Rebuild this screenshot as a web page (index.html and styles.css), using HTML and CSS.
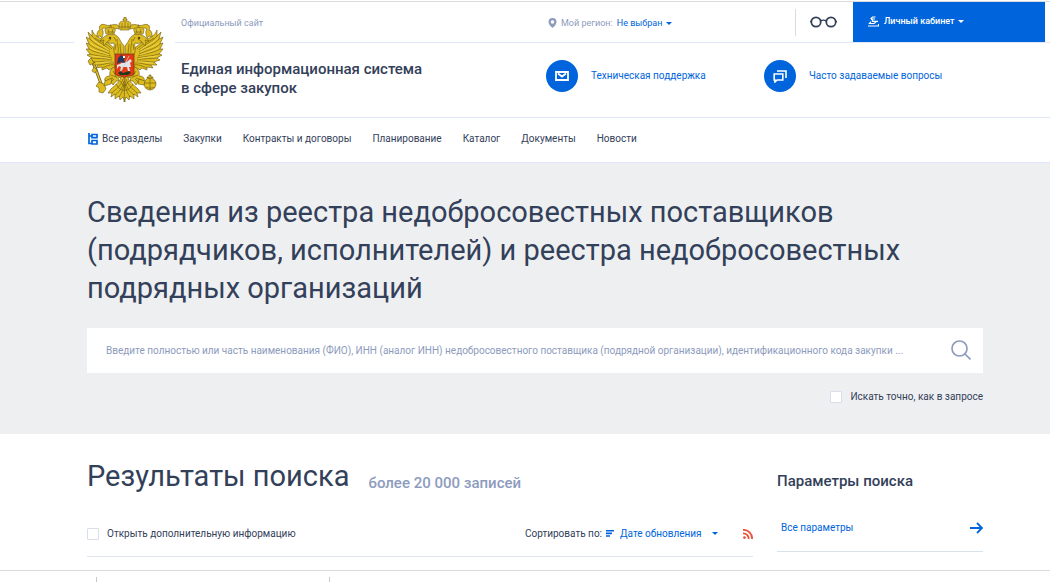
FILE: index.html
```html
<!DOCTYPE html>
<html lang="ru">
<head>
  <meta charset="UTF-8">
  <meta name="viewport" content="width=device-width, initial-scale=1.0">
  <title>Единая информационная система в сфере закупок</title>
  <link rel="stylesheet" href="styles.css">
</head>
<body>
  <header class="header">
    <div class="header-edge"></div>
    <a href="#" class="logo" aria-label="Главная">
      <svg width="78" height="85" viewBox="0 0 78 85">
        <defs>
          <g id="half" stroke="#6b580e" stroke-width="0.6" stroke-linejoin="round">
            <!-- ribbon -->
            <path fill="#dcbc1e" d="M33 9C28 5 25 10 20 8C15 6 12 9 14 13C10 14 12 18 10 20L14 19L16 21C17 17 18 15 16 12C19 10 21 12 25 12C28 12 30 11 33 12Z"/>
            <!-- wing -->
            <path fill="#dcbc1e" d="M27 30C23 27 20 24 16 22C11 20 8 18 6 13L6 19L2 15L4 22L0 20L3 27L0 26L3 32L0 32L4 37L1 38L6 41L3 43L9 45L6 48L12 48L10 51L16 50L16 53L21 51L23 53L30 49L31 36Z"/>
            <path fill="none" d="M6 19C10 24 17 27 24 33M4 22C9 28 16 30 24 35M3 27C8 32 15 33 24 37M3 32C9 36 16 36 25 39M4 37C10 39 17 39 26 41M6 41C12 42 19 41 26 43M9 45C15 45 21 43 27 45M12 48C18 48 23 45 28 46M16 51C21 49 25 47 29 48M9 21C14 25 20 26 26 32"/>
            <path fill="none" stroke="#f4df63" stroke-width="0.7" d="M5 21C10 26 17 28 23 33M4 26C9 30 16 31 23 35M4 31C9 34 15 35 23 38M6 39C12 40 19 40 25 42M10 46C16 46 22 44 27 45"/>
            <!-- head and neck -->
            <path fill="#dcbc1e" d="M30 39C26 34 29 29 28 26C25 27 23 26 21 25L18 29C17 26 17 25 18 23L14 24C17 20 20 18 24 17C29 16 33 20 35 25L38 29L38 38Z"/>
            <path fill="none" d="M31 22C31 27 33 30 32 36M34 27L35 37M28 20L30 24M21 25L25 22M30 27L29 33"/>
            <circle cx="24" cy="21" r="1" fill="#27200a"/>
            <!-- small crown -->
            <path fill="#dfc02c" d="M20 17L19 13C19 11 22 10 24 11L24 8L25 8L25 11C28 10 30 12 29 14L28 17Z"/>
            <path fill="none" d="M21 15H28M22 12L23 16M27 12L26 16"/>
            <!-- leg and claw -->
            <path fill="#dcbc1e" d="M29 50C25 51 23 55 24 59C20 59 18 61 19 64L22 63L21 67L25 65L27 68L30 64L33 64L32 61L36 60L34 52Z"/>
            <path fill="none" d="M27 54L31 61M25 58L30 60M30 53L33 59M22 63L27 61M25 65L28 62"/>
            <!-- tail -->
            <path fill="#dcbc1e" d="M38 58L35 60C34 65 29 68 25 72L22 76L26 76L25 80L29 77L29 82L33 79L34 83L37 80L39 85Z"/>
            <path fill="none" d="M37 62C35 69 30 72 26 76M38 64C36 72 33 75 29 78M38 67C37 74 35 77 33 80M30 67C32 71 36 74 38 73M34 64L38 69"/>
          </g>
        </defs>
        <path d="M6 42L17 72" stroke="#6b580e" stroke-width="3"/>
        <path d="M6 42L17 72" stroke="#e0c335" stroke-width="1.500"/>
        <use href="#half"/>
        <use href="#half" transform="matrix(-1 0 0 1 77 0)"/>
        <!-- scepter -->
        <g fill="#dcbc1e" stroke="#6b580e" stroke-width="0.6">
          <path d="M5 41L2 44L4 48L8 46ZM13 65L10 69L13 71L13 75L17 76L20 72L18 67ZM8 50L6 54L9 56L11 53Z"/>
          <path d="M19 64L26 61L25 67L18 69Z"/>
          <!-- orb -->
          <circle cx="64" cy="67" r="6"/>
          <path fill="none" d="M58 66H70M64 61V73M60 70C63 72 67 71 69 70"/>
          <path d="M63 58H65V60H67V61H61V60H63Z"/>
          <path d="M53 62L59 64L58 68L52 67Z"/>
          <!-- main crown -->
          <path fill="#dfc02c" d="M34 13L33 7C34 4 37 4 38 4L38 3H37V2H38V0H40V2H41V3H40L40 4C43 4 45 5 45 8L43 13Z"/>
          <path fill="none" d="M34 10H44M36 6L36 12M39 4V12M42 6L42 12"/>
        </g>
        <!-- shield -->
        <path fill="#e33b16" stroke="#7b3a0c" stroke-width="0.8" d="M29 37H48V57L45 59H41L38.500 61L36 59H32L29 57Z"/>
        <path fill="#dfe5ea" d="M34 47L37 45L39 46L42 44L44 42L46 44L44 46L45 50L43 50L44 54L42 54L41 50L37 50L36 53L34 54L35 50L33 49L31 52L31 48Z"/>
        <path fill="#253a5e" d="M32 41L35 38L39 40L38 43L39 45L37 46L35 45L31 47Z"/>
        <path fill="#fff" d="M37 39H39V41H37Z"/>
        <path stroke="#ced2d6" stroke-width="0.8" d="M43 39L34 56"/>
        <path fill="#27371f" d="M32 56L35 54L37 56L43 54L45 56L42 58H34Z"/>
      </svg>
    </a>
    <div class="topbar">
      <span class="official">Официальный сайт</span>
      <div class="region">
        <svg width="9" height="10" viewBox="0 0 9 10"><path fill="#8d9bbd" fill-rule="evenodd" d="M4.500 0A4 4 0 0 0 .5 4C.5 6.500 3 8.500 4.500 10C6 8.500 8.500 6.500 8.500 4A4 4 0 0 0 4.500 0ZM4.500 2.200A1.800 1.800 0 1 1 4.500 5.800A1.800 1.800 0 1 1 4.500 2.200Z"/></svg>
        <span>Мой регион:</span>
        <button type="button" class="region-button">Не выбран <i class="caret"></i></button>
      </div>
      <button type="button" class="vision" aria-label="Версия для слабовидящих">
        <svg width="28" height="12" viewBox="0 0 28 12" fill="none" stroke="#334059" stroke-width="1.700"><circle cx="6" cy="6" r="4.700"/><circle cx="21" cy="6" r="4.700"/><path d="M10.500 5C12 4 15 4 16.500 5M0 5.500H2M25 5.500H27"/></svg>
      </button>
      <button type="button" class="cabinet">
        <svg width="11" height="11" viewBox="0 0 11 11" fill="none" stroke="#fff" stroke-width="1.200"><path d="M7.500 1H4.500L3 2.500L5 5M3.500 3H7M4 5.300H10M3 5.500L1.500 7.500H6L8 6M0 10H10.500V8"/></svg>
        <span>Личный кабинет</span>
        <i class="caret"></i>
      </button>
    </div>
    <div class="brand">
      <a href="#" class="brand-name">Единая информационная система<br>в сфере закупок</a>
      <a href="#" class="help">
        <span class="help-icon">
          <svg width="14" height="10" viewBox="0 0 14 10" fill="none" stroke="#fff" stroke-width="1.800"><path d="M1 1H13V9H1ZM3 2.500L7 5.500L11 2.500"/></svg>
        </span>
        Техническая поддержка
      </a>
      <a href="#" class="help">
        <span class="help-icon">
          <svg width="14" height="14" viewBox="0 0 14 14" fill="none" stroke="#fff" stroke-width="1.600"><path d="M4 2H13V9M1.200 5H9.800V11H4L2 13V11H1.200Z"/></svg>
        </span>
        Часто задаваемые вопросы
      </a>
    </div>
  </header>

  <nav class="menu">
    <a href="#" class="menu-all">
      <svg width="10" height="12" viewBox="0 0 10 12" fill="none" stroke="#0065dd" stroke-width="1.700"><path d="M1 0V10.500H4M1 3H4M4 1.500H9V4.700H4ZM4 7.500H9V11H4Z"/></svg>
      Все разделы
    </a>
    <a href="#">Закупки</a>
    <a href="#">Контракты и договоры</a>
    <a href="#">Планирование</a>
    <a href="#">Каталог</a>
    <a href="#">Документы</a>
    <a href="#">Новости</a>
  </nav>

  <section class="hero">
    <h1>Сведения из реестра недобросовестных поставщиков (подрядчиков, исполнителей) и реестра недобросовестных подрядных организаций</h1>
    <form class="search">
      <input type="text" class="search-input" aria-label="Поиск" placeholder="Введите полностью или часть наименования (ФИО), ИНН (аналог ИНН) недобросовестного поставщика (подрядной организации), идентификационного кода закупки ...">
      <button type="button" class="search-button" aria-label="Найти">
        <svg width="20" height="20" viewBox="0 0 20 20" fill="none" stroke="#8d9bbd" stroke-width="1.700"><circle cx="8.500" cy="8.500" r="7.500"/><path d="M14 14L19.500 19.500"/></svg>
      </button>
    </form>
    <label class="check exact"><input type="checkbox"> Искать точно, как в запросе</label>
  </section>

  <main class="content">
    <section class="results">
      <div class="results-title">
        <h2>Результаты поиска</h2>
        <span class="total">более 20 000 записей</span>
      </div>
      <div class="toolbar">
        <label class="check"><input type="checkbox"> Открыть дополнительную информацию</label>
        <div class="sort">
          <label for="sort">Сортировать по:</label>
          <svg width="8" height="7" viewBox="0 0 8 7" fill="#0065dd"><path d="M0 0H8V1.600H0ZM0 2.600H6V4.200H0ZM0 5.200H4V6.800H0Z"/></svg>
          <select id="sort">
            <option>Дате обновления</option>
          </select>
          <i class="caret"></i>
          <a href="#" class="rss" aria-label="RSS">
            <svg width="10" height="10" viewBox="0 0 11 11" fill="none" stroke="#e8533a" stroke-width="2"><path d="M0 1A9.500 9.500 0 0 1 10 11M0 4.800A5.800 5.800 0 0 1 6.200 11"/><circle cx="1.600" cy="9.400" r="1.500" fill="#e8533a" stroke="none"/></svg>
          </a>
        </div>
      </div>
    </section>
    <aside class="params">
      <h3>Параметры поиска</h3>
      <a href="#" class="params-link">
        Все параметры
        <svg width="13" height="12" viewBox="0 0 13 12" fill="none" stroke="#0065dd" stroke-width="1.800"><path d="M0 6H12M7 1L12 6L7 11"/></svg>
      </a>
    </aside>
  </main>

  <footer class="bottom">
    <div></div>
    <div></div>
    <div></div>
  </footer>
</body>
</html>
```
FILE: styles.css
```css
* {
  box-sizing: border-box;
}
body {
  margin: 0;
  padding-top: 1px;
  font-family: Roboto, Arial, sans-serif;
  font-size: 10px;
  line-height: 16px;
  color: #334059;
  background: #fff;
}
a {
  color: inherit;
  text-decoration: none;
}
svg {
  display: block;
  flex: none;
}
button {
  padding: 0;
  border: 0;
  background: none;
  font: inherit;
  color: inherit;
  cursor: pointer;
}
h1,
h2,
h3 {
  margin: 0;
}
.caret {
  flex: none;
  border: 3px solid transparent;
  border-top-color: currentColor;
  border-bottom: 0;
}

.header {
  display: grid;
  grid-template-columns: 74px 101px 1fr;
  grid-template-rows: 42px 73px;
  border-top: 1px solid #d9dcde;
  border-bottom: 1px solid #dfe8f8;
}
.header-edge {
  margin-bottom: 1px;
  border-bottom: 1px solid #dfe8fb;
}
.logo {
  grid-row: 1 / 3;
  grid-column: 2;
  padding: 15px 0 0 12px;
}
.topbar {
  display: grid;
  grid-template-columns: 1fr 249px 58px 192px;
  align-items: center;
  margin-bottom: 1px;
  padding: 0 5px 0 6px;
  border-bottom: 1px solid #dfe8fb;
  font-size: 9px;
}
.official {
  padding-top: 2px;
  color: #8d9bbd;
}
.region {
  display: flex;
  align-items: center;
  gap: 4px;
  padding: 2px 0 0 2px;
  color: #8d9bbd;
}
.region-button {
  display: flex;
  align-items: center;
  gap: 4px;
  color: #0065dd;
}
.vision {
  display: flex;
  align-items: center;
  height: 27px;
  padding-left: 14px;
  border-left: 1px solid #d9dcde;
}
.cabinet {
  display: flex;
  align-items: center;
  gap: 5px;
  align-self: stretch;
  padding: 0 0 2px 15px;
  background: #0065dd;
  color: #fff;
  font-weight: 500;
}
.cabinet .caret {
  margin-left: -2px;
}
.brand {
  display: grid;
  grid-column: 3;
  grid-template-columns: 1fr 218px 286px;
  align-items: center;
  padding: 0 0 10px 6px;
}
.brand-name {
  padding-top: 7px;
  font-size: 15px;
  font-weight: 500;
  line-height: 19px;
}
.help {
  display: flex;
  align-items: center;
  gap: 13px;
  color: #0065dd;
}
.help-icon {
  display: flex;
  align-items: center;
  justify-content: center;
  width: 32px;
  height: 32px;
  border-radius: 50%;
  background: #0065dd;
}

.menu {
  display: flex;
  align-items: center;
  gap: 21px;
  height: 44px;
  padding: 0 67px 2px 88px;
}
.menu-all {
  display: flex;
  align-items: center;
  gap: 4px;
}

.hero {
  padding: 30px 67px 29px 87px;
  border-top: 1px solid #dfe4fa;
  background: #eeeff1;
}
.hero h1 {
  font-size: 29px;
  font-weight: 400;
  line-height: 38px;
}
.search {
  display: flex;
  margin-top: 21px;
  height: 45px;
  background: #fff;
}
.search-input {
  flex: 1;
  min-width: 0;
  padding: 0 0 0 19px;
  border: 0;
  outline: 0;
  background: none;
  font: inherit;
  color: inherit;
  text-overflow: ellipsis;
}
.search-input::placeholder {
  color: #8d9bbd;
}
.search-button {
  display: flex;
  align-items: center;
  padding: 0 12px 2px 18px;
}
.check {
  display: flex;
  align-items: center;
  gap: 8px;
}
.check input {
  appearance: none;
  width: 12px;
  height: 12px;
  margin: 0;
  border: 1px solid #d9dfea;
  border-radius: 1px;
  background: #fff;
}
.check input:checked {
  background: #0065dd;
}
.exact {
  justify-content: flex-end;
  margin-top: 16px;
}

.content {
  display: grid;
  grid-template-columns: 1fr 206px;
  gap: 24px;
  padding: 23px 67px 13px 87px;
}
.results-title {
  display: flex;
  align-items: flex-end;
  gap: 19px;
}
.results h2 {
  font-size: 29px;
  font-weight: 400;
  line-height: 38px;
}
.total {
  padding-bottom: 4px;
  color: #8d9bbd;
  font-size: 15px;
  font-weight: 500;
}
.toolbar {
  display: flex;
  align-items: center;
  justify-content: space-between;
  margin-top: 16px;
  height: 46px;
  border-bottom: 1px solid #dfe3ee;
}
.sort {
  display: flex;
  align-items: center;
  gap: 4px;
}
.sort select {
  appearance: none;
  margin: 0;
  padding: 0 6px 0 2px;
  border: 0;
  background: none;
  font: inherit;
  color: #0065dd;
}
.sort .caret {
  color: #0065dd;
}
.rss {
  margin-left: 21px;
}
.params h3 {
  padding-top: 15px;
  font-size: 15px;
  font-weight: 500;
  line-height: 19px;
}
.params-link {
  display: flex;
  align-items: center;
  justify-content: space-between;
  margin-top: 13px;
  padding: 0 0 0 4px;
  height: 48px;
  border-bottom: 1px solid #d6e2ec;
  color: #0065dd;
}

.bottom {
  display: grid;
  grid-template-columns: 96px 233px 1fr;
  padding-top: 6px;
  border-top: 1px solid #d9dcde;
}
.bottom div {
  height: 5px;
}
.bottom div + div {
  border-left: 1px solid #c4c8cc;
}
```
